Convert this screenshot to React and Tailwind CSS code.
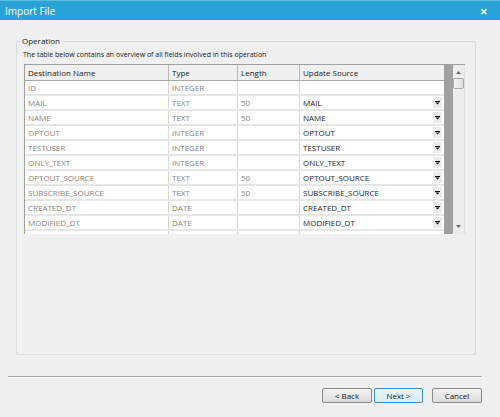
import React from 'react';

const rows = [
  { name: 'ID', type: 'INTEGER', length: '', source: '' },
  { name: 'MAIL', type: 'TEXT', length: '50', source: 'MAIL' },
  { name: 'NAME', type: 'TEXT', length: '50', source: 'NAME' },
  { name: 'OPTOUT', type: 'INTEGER', length: '', source: 'OPTOUT' },
  { name: 'TESTUSER', type: 'INTEGER', length: '', source: 'TESTUSER' },
  { name: 'ONLY_TEXT', type: 'INTEGER', length: '', source: 'ONLY_TEXT' },
  { name: 'OPTOUT_SOURCE', type: 'TEXT', length: '50', source: 'OPTOUT_SOURCE' },
  { name: 'SUBSCRIBE_SOURCE', type: 'TEXT', length: '50', source: 'SUBSCRIBE_SOURCE' },
  { name: 'CREATED_DT', type: 'DATE', length: '', source: 'CREATED_DT' },
  { name: 'MODIFIED_DT', type: 'DATE', length: '', source: 'MODIFIED_DT' },
  { name: '', type: '', length: '', source: '' },
];

const DropArrow = () => (
  <div className="w-[11px] h-[13px] bg-[#ececec] border border-white flex items-center justify-center">
    <svg width="5" height="4" viewBox="0 0 5 4">
      <rect x="0" y="0" width="5" height="1" fill="#000" />
      <path d="M0.5 1.5 L4.5 1.5 L2.5 3.5 Z" fill="#000" />
    </svg>
  </div>
);

const Button = ({ children, primary }) => (
  <button
    className={
      primary
        ? 'w-[49px] h-[15px] rounded-[2px] border border-[#3c8fc8] bg-gradient-to-b from-[#eaf6fd] to-[#d6ecf9] text-[8px] text-[#1a1a1a] leading-none'
        : 'w-[50px] h-[15px] rounded-[2px] border border-[#8a8a8a] bg-gradient-to-b from-[#f3f3f3] to-[#dddddd] text-[8px] text-[#1a1a1a] leading-none'
    }
  >
    {children}
  </button>
);

export default function App() {
  return (
    <div
      className="w-[500px] h-[417px] bg-[#f0f0f0] flex flex-col overflow-hidden"
      style={{ fontFamily: '"Open Sans", "Liberation Sans", sans-serif' }}
    >
      {/* Title bar */}
      <div className="h-[20px] bg-[#29a3d7] border-t border-[#5cbbe3] flex items-center justify-between pl-[5px] pr-[12px] pt-[2px]">
        <span className="text-white text-[10px]">Import File</span>
        <span className="text-white text-[9px] font-bold leading-none">✕</span>
      </div>

      {/* Group box */}
      <div className="ml-[16px] mt-[21px] w-[460px] h-[314px] border border-[#dcdcdc] rounded-[2px] flex flex-col">
        <div className="-mt-[6px] ml-[3px] px-[2px] bg-[#f0f0f0] self-start text-[8px] leading-[10px] text-[#1a1a1a]">
          Operation
        </div>
        <div className="ml-[6px] mt-[4px] text-[7px] leading-[10px] text-[#1a1a1a]">
          The table below contains an overview of all fields involved in this operation
        </div>

        {/* Table */}
        <div className="ml-[7px] mt-[4px] w-[441px] h-[170px] border-l border-t border-[#a0a0a0] flex overflow-hidden">
          <div className="w-[419px] flex flex-col bg-white">
            <div className="grid grid-cols-[144px_69px_62px_144px] h-[16px] shrink-0 bg-[#f0f0f0] border-b border-[#a8a8a8] text-[8px] text-[#1a1a1a]">
              <div className="px-[3px] flex items-center border-r border-[#b8b8b8]">Destination Name</div>
              <div className="px-[3px] flex items-center border-r border-[#b8b8b8]">Type</div>
              <div className="px-[3px] flex items-center border-r border-[#b8b8b8]">Length</div>
              <div className="px-[3px] flex items-center">Update Source</div>
            </div>
            {rows.map((r, i) => (
              <div
                key={i}
                className="grid grid-cols-[144px_69px_62px_144px] h-[15px] shrink-0 border-b-2 border-[#e6e6e6] text-[8px]"
              >
                <div className="px-[3px] flex items-center border-r border-[#d8d8d8] text-[#858585]">{r.name}</div>
                <div className="px-[3px] flex items-center border-r border-[#d8d8d8] text-[#858585]">{r.type}</div>
                <div className="px-[3px] flex items-center border-r border-[#d8d8d8] text-[#858585]">{r.length}</div>
                <div className="pl-[3px] pr-[1px] flex items-center justify-between text-[#1e1e30]">
                  <span>{r.source}</span>
                  {r.source && <DropArrow />}
                </div>
              </div>
            ))}
          </div>
          <div className="w-[9px] bg-[#a0a0a0]" />
          {/* Scrollbar */}
          <div className="w-[13px] bg-[#ededed] border-r border-[#e2e2e2] flex flex-col items-center">
            <svg className="mt-[6px]" width="5" height="3" viewBox="0 0 5 3">
              <path d="M0 3 L2.5 0 L5 3 Z" fill="#6a6a6a" />
            </svg>
            <div className="mt-[4px] w-[11px] h-[11px] rounded-[2px] border border-[#a9a9a9] bg-gradient-to-r from-[#f6f6f6] to-[#e0e0e0]" />
            <div className="flex-1" />
            <svg className="mb-[6px]" width="5" height="3" viewBox="0 0 5 3">
              <path d="M0 0 L2.5 3 L5 0 Z" fill="#6a6a6a" />
            </svg>
          </div>
        </div>
      </div>

      {/* Separator */}
      <div className="ml-[8px] mt-[21px] w-[474px] h-px bg-[#a8a8a8] border-b border-white box-content" />

      {/* Buttons */}
      <div className="mt-[10px] ml-[322px] flex">
        <Button>&lt; Back</Button>
        <div className="w-[2px]" />
        <Button primary>Next &gt;</Button>
        <div className="w-[9px]" />
        <Button>Cancel</Button>
      </div>
    </div>
  );
}
